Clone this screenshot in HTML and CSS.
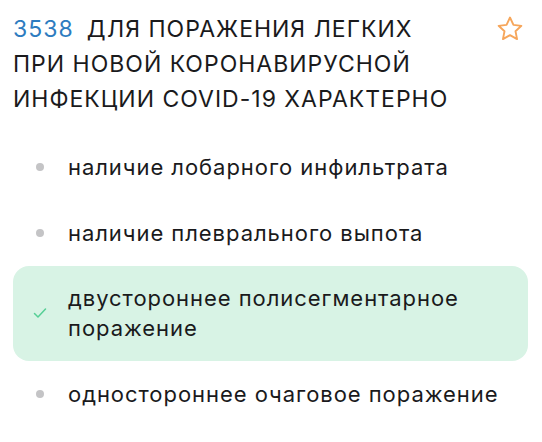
FILE: index.html
```html
<!DOCTYPE html>
<html lang="ru">
<head>
    <meta charset="UTF-8">
    <meta name="viewport" content="width=device-width, initial-scale=1.0">
    <title>Вопрос 3538</title>
    <link rel="stylesheet" href="styles.css">
</head>
<body>
<div class="question">
    <div class="question-head">
        <h1 class="question-title"><span class="question-num">3538</span>ДЛЯ ПОРАЖЕНИЯ ЛЕГКИХ<br>ПРИ НОВОЙ КОРОНАВИРУСНОЙ<br>ИНФЕКЦИИ COVID-19 ХАРАКТЕРНО</h1>
        <button class="fav-btn" type="button" aria-label="В избранное">
            <svg width="30" height="30" viewBox="0 0 24 24" fill="none" stroke="#f6a65b" stroke-width="1.5" stroke-linejoin="round">
                <path d="M12 2.8l2.75 5.9 6.35.75-4.7 4.35 1.25 6.3L12 16.95 6.35 20.1l1.25-6.3-4.7-4.35 6.35-.75z"/>
            </svg>
        </button>
    </div>

    <ul class="answers">
        <li class="answer"><span class="marker"><span class="dot"></span></span><span class="answer-text">наличие лобарного инфильтрата</span></li>
        <li class="answer"><span class="marker"><span class="dot"></span></span><span class="answer-text">наличие плеврального выпота</span></li>
        <li class="answer correct">
            <span class="marker">
                <svg width="14" height="12" viewBox="0 0 14 12" fill="none" stroke="#56cf96" stroke-width="1.5" stroke-linecap="round" stroke-linejoin="round"><path d="M1.5 6.5l3.5 3.5 7.5-8"/></svg>
            </span>
            <span class="answer-text">двустороннее полисегментарное поражение</span>
        </li>
        <li class="answer"><span class="marker"><span class="dot"></span></span><span class="answer-text">одностороннее очаговое поражение</span></li>
    </ul>
</div>
</body>
</html>
```

FILE: styles.css
```css
body {
    margin: 0;
    background: #fff;
    font-family: Inter, "Noto Sans", sans-serif;
    color: #1a1a1c;
}

.question {
    padding: 12px 14px 0 13px;
}

.question-head {
    display: flex;
    align-items: flex-start;
    justify-content: space-between;
}

.question-title {
    margin: 0;
    max-width: 470px;
    font-size: 23px;
    font-weight: 400;
    line-height: 35px;
    letter-spacing: 1px;
    white-space: nowrap;
}

.question-num {
    color: #2d7cc0;
    margin-right: 13px;
}

.fav-btn {
    padding: 0;
    margin: 2px 3px 0 0;
    border: none;
    background: none;
    line-height: 0;
}

.answers {
    list-style: none;
    margin: 17px 0 0;
    padding: 0;
}

.answer {
    display: flex;
    align-items: center;
    padding: 18px 16px 18px 15px;
    font-size: 22px;
    line-height: 30px;
    letter-spacing: 0.95px;
    border-radius: 16px;
}

.answer.correct {
    padding-top: 17px;
    padding-bottom: 18px;
    background: #d8f3e5;
}

.marker {
    flex: none;
    width: 24px;
    margin-right: 16px;
    display: flex;
    justify-content: center;
}

.dot {
    width: 8px;
    height: 8px;
    border-radius: 50%;
    background: #c4c4c6;
}
```
